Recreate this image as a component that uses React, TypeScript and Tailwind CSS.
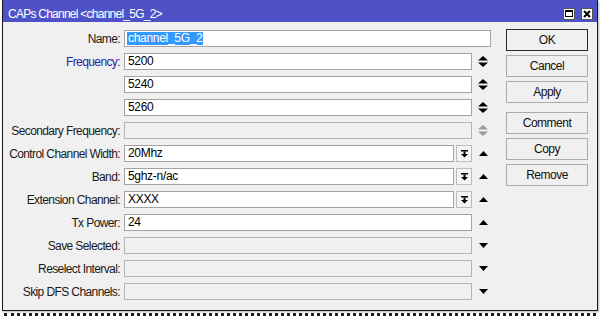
import React from 'react';

type Arrow = 'updown' | 'up' | 'down' | 'none';

type Row = {
  label: string;
  value?: string;
  blue?: boolean;
  disabled?: boolean;
  combo?: boolean;
  arrow: Arrow;
  wide?: boolean;
  selected?: boolean;
};

const rows: Row[] = [
  { label: 'Name:', value: 'channel_5G_2', arrow: 'none', wide: true, selected: true },
  { label: 'Frequency:', value: '5200', blue: true, arrow: 'updown' },
  { label: '', value: '5240', arrow: 'updown' },
  { label: '', value: '5260', arrow: 'updown' },
  { label: 'Secondary Frequency:', disabled: true, arrow: 'updown' },
  { label: 'Control Channel Width:', value: '20Mhz', combo: true, arrow: 'up' },
  { label: 'Band:', value: '5ghz-n/ac', combo: true, arrow: 'up' },
  { label: 'Extension Channel:', value: 'XXXX', combo: true, arrow: 'up' },
  { label: 'Tx Power:', value: '24', arrow: 'up' },
  { label: 'Save Selected:', disabled: true, arrow: 'down' },
  { label: 'Reselect Interval:', disabled: true, arrow: 'down' },
  { label: 'Skip DFS Channels:', disabled: true, arrow: 'down' },
];

const ArrowIcon = ({ kind, gray }: { kind: Arrow; gray?: boolean }) => {
  const fill = gray ? '#9a9a9a' : '#000';
  if (kind === 'updown')
    return (
      <svg width="10" height="11" viewBox="0 0 10 11">
        <polygon points="0,4.5 10,4.5 5,0" fill={fill} />
        <polygon points="0,6.5 10,6.5 5,11" fill={fill} />
      </svg>
    );
  if (kind === 'up')
    return (
      <svg width="9" height="5" viewBox="0 0 9 5">
        <polygon points="0,5 9,5 4.5,0" fill={fill} />
      </svg>
    );
  if (kind === 'down')
    return (
      <svg width="9" height="5" viewBox="0 0 9 5">
        <polygon points="0,0 9,0 4.5,5" fill={fill} />
      </svg>
    );
  return null;
};

const DropIcon = () => (
  <svg width="7" height="8" viewBox="0 0 7 8">
    <rect x="0" y="0" width="7" height="1.5" fill="#000" />
    <rect x="2.5" y="1.5" width="2" height="2.5" fill="#000" />
    <polygon points="0,4 7,4 3.5,7.5" fill="#000" />
  </svg>
);

const FormRow = ({ row }: { row: Row }) => {
  const box = row.disabled
    ? 'bg-[#f0f0f0] border-[#b4b4b4]'
    : 'bg-white border-[#a3a3a3]';
  return (
    <div className="flex items-center h-[17px]">
      <div
        className={`w-[117px] shrink-0 text-right text-[12px] tracking-[-0.6px] leading-none ${
          row.blue ? 'text-[#2325a8]' : 'text-[#1a1a1a]'
        }`}
      >
        {row.label}
      </div>
      <div className="ml-[4px] flex items-center">
        {row.combo ? (
          <div className="flex">
            <div className={`w-[330px] h-[17px] border ${box} pl-[3px] text-[12px] leading-[15px] tracking-[-0.3px] text-black`}>
              {row.value}
            </div>
            <div className="ml-[2px] w-[16px] h-[17px] border border-[#bdbdbd] bg-[#f4f4f4] flex items-center justify-center">
              <DropIcon />
            </div>
          </div>
        ) : (
          <div
            className={`${row.wide ? 'w-[367px]' : 'w-[348px]'} h-[17px] border ${box} pl-[2px] text-[12px] leading-[15px] tracking-[-0.3px] text-black`}
          >
            {row.selected ? (
              <span className="bg-[#3399ff] text-white px-[1px] inline-block leading-[13px] mt-[1px]">{row.value}</span>
            ) : (
              <span className="pl-[1px]">{row.value}</span>
            )}
          </div>
        )}
        {!row.wide && (
          <div className="w-[22px] flex justify-center">
            <ArrowIcon kind={row.arrow} gray={row.disabled && row.arrow === 'updown'} />
          </div>
        )}
      </div>
    </div>
  );
};

const Btn = ({ label, primary, className = '' }: { label: string; primary?: boolean; className?: string }) => (
  <div
    className={`w-[82px] h-[22px] flex items-center justify-center text-[12px] tracking-[-0.5px] text-[#111] bg-[#f0f0f0] border ${
      primary ? 'border-[#2b2b2b]' : 'border-[#acacac]'
    } ${className}`}
  >
    {label}
  </div>
);

const App = () => {
  return (
    <div className="w-[600px] h-[316px] bg-white overflow-hidden font-['Liberation_Sans',Arial,sans-serif]">
      <div className="ml-[2px] w-[596px] h-[311px] border-l border-r border-b border-[#1a1a1a] bg-[#f0f0f0] flex flex-col shadow-[1px_1px_2px_rgba(0,0,0,0.3)]">
        <div className="h-[22px] bg-[#4f52c7] flex items-center pt-[5px] pl-[5px] pr-[4px]">
          <span className="text-white text-[12px] tracking-[-0.75px] leading-none">CAPs Channel &lt;channel_5G_2&gt;</span>
          <div className="ml-auto flex gap-[6px]">
            <div className="w-[12px] h-[12px] bg-white border border-[#555] flex items-center justify-center">
              <div className="w-[8px] h-[7px] border border-black border-t-2" />
            </div>
            <div className="w-[12px] h-[12px] bg-white border border-[#555] flex items-center justify-center">
              <svg width="8" height="8" viewBox="0 0 8 8">
                <path d="M1 1 L7 7 M7 1 L1 7" stroke="#000" strokeWidth="2" />
              </svg>
            </div>
          </div>
        </div>
        <div className="flex flex-1">
          <div className="pt-[8px] flex flex-col gap-[6px]">
            {rows.map((r, i) => (
              <FormRow key={i} row={r} />
            ))}
          </div>
          <div className="ml-[12px] pt-[7px] flex flex-col gap-[4px]">
            <Btn label="OK" primary />
            <Btn label="Cancel" />
            <Btn label="Apply" />
            <Btn label="Comment" className="mt-[5px]" />
            <Btn label="Copy" />
            <Btn label="Remove" />
          </div>
        </div>
      </div>
      <div className="mt-[2px] mx-[4px] h-[3px] border-t-[3px] border-dotted border-[#222]" />
    </div>
  );
};

export default App;
